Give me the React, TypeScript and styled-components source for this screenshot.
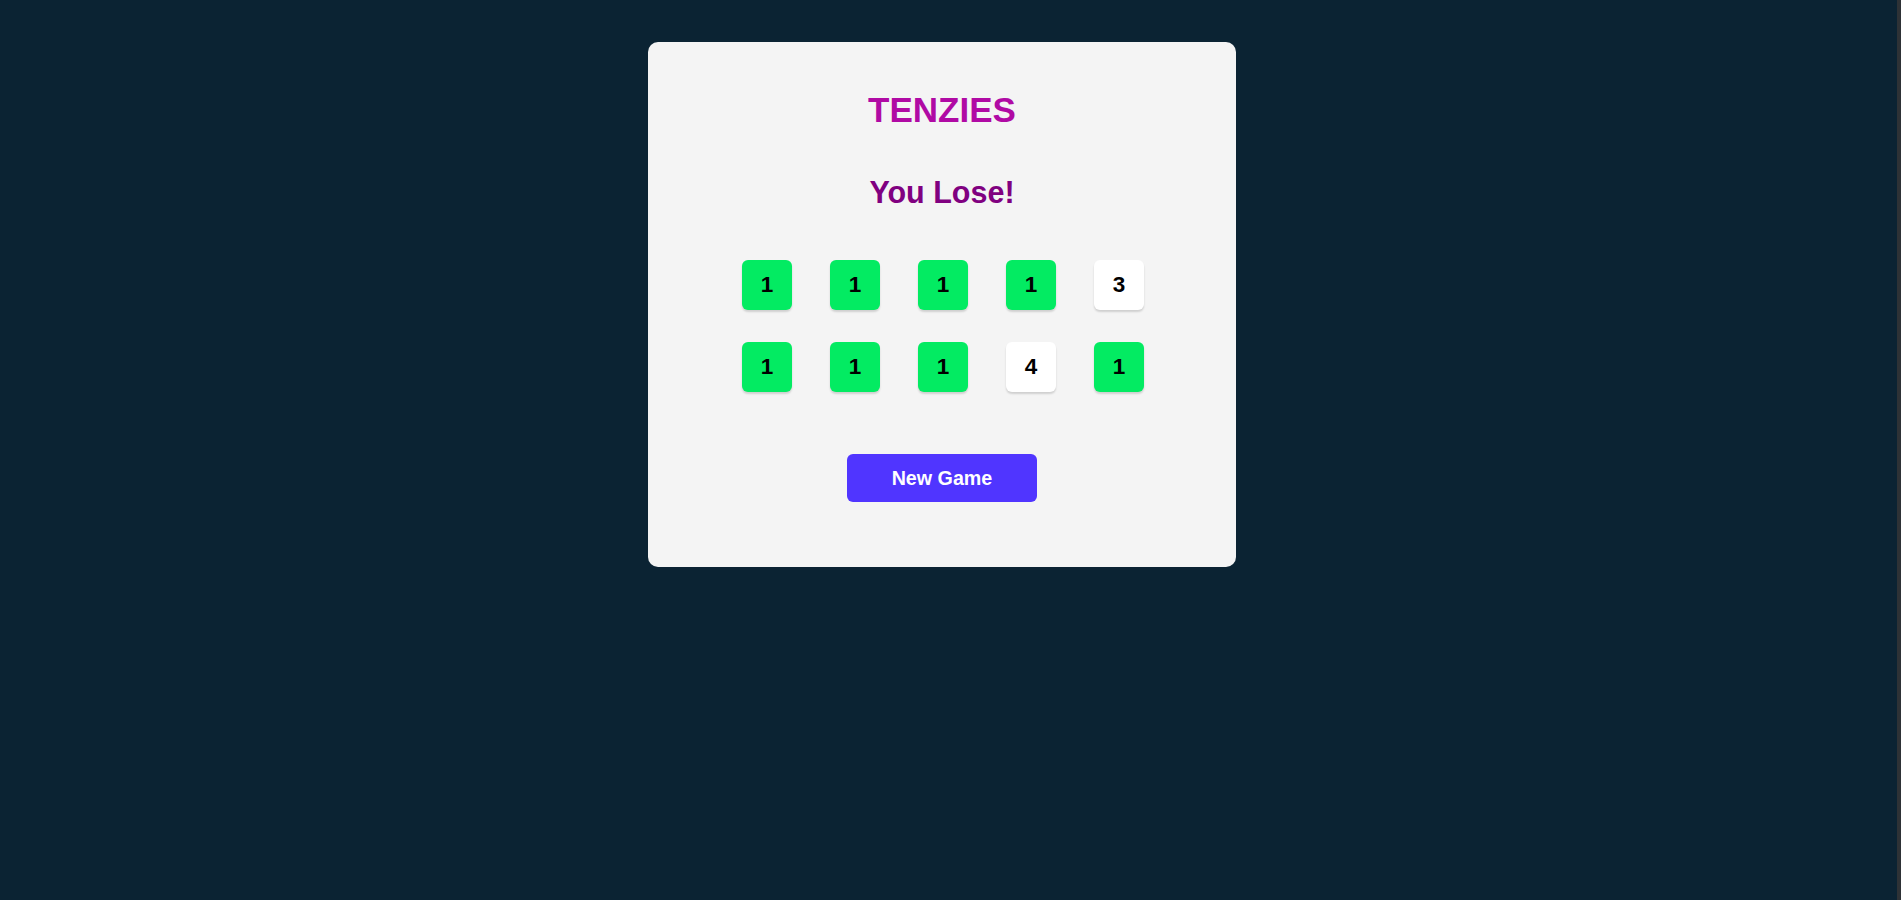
import React from "react";
import styled, { createGlobalStyle } from "styled-components";

const GlobalStyle = createGlobalStyle`
  html, body {
    margin: 0;
    padding: 0;
    background: #0b2333;
    font-family: "Liberation Sans", Arial, sans-serif;
  }
  * { box-sizing: border-box; }
`;

const Page = styled.div`
  display: flex;
  min-height: 900px;
  background: #0b2333;
`;

const Main = styled.main`
  flex: 1;
  display: flex;
  justify-content: center;
  align-items: flex-start;
  padding: 42px 13px 0 0;
`;

const Strip = styled.div`
  width: 4px;
  background: #2e3236;
`;

const Card = styled.section`
  width: 588px;
  height: 525px;
  background: #f4f4f4;
  border-radius: 10px;
  padding: 47px 0 65px;
  display: flex;
  flex-direction: column;
  align-items: center;
`;

const Title = styled.h1`
  margin: 0;
  font-size: 35px;
  line-height: 42px;
  font-weight: 700;
  color: #b00aa4;
`;

const Status = styled.h2`
  margin: 43px 0 0;
  font-size: 30.5px;
  line-height: 36px;
  font-weight: 700;
  color: #800080;
`;

const DiceGrid = styled.div`
  margin: 50px 0 0 2px;
  display: grid;
  grid-template-columns: repeat(5, 50px);
  column-gap: 38px;
  row-gap: 32px;
`;

const Die = styled.div<{ $held: boolean }>`
  width: 50px;
  height: 50px;
  border-radius: 6px;
  background: ${(p) => (p.$held ? "#03eb62" : "#ffffff")};
  box-shadow: 0 2px 2px rgba(0, 0, 0, 0.15);
  display: flex;
  align-items: center;
  justify-content: center;
  font-size: 22.5px;
  font-weight: 700;
  color: #000;
`;

const Button = styled.button`
  margin-top: 62px;
  width: 190px;
  height: 48px;
  border: none;
  border-radius: 6px;
  background: #5035ff;
  color: #fff;
  font-family: "Liberation Sans", Arial, sans-serif;
  font-size: 19.7px;
  font-weight: 700;
  cursor: pointer;
`;

const dice = [
  { value: 1, held: true },
  { value: 1, held: true },
  { value: 1, held: true },
  { value: 1, held: true },
  { value: 3, held: false },
  { value: 1, held: true },
  { value: 1, held: true },
  { value: 1, held: true },
  { value: 4, held: false },
  { value: 1, held: true },
];

export default function App() {
  return (
    <>
      <GlobalStyle />
      <Page>
        <Main>
          <Card>
            <Title>TENZIES</Title>
            <Status>You Lose!</Status>
            <DiceGrid>
              {dice.map((d, i) => (
                <Die key={i} $held={d.held}>
                  {d.value}
                </Die>
              ))}
            </DiceGrid>
            <Button>New Game</Button>
          </Card>
        </Main>
        <Strip />
      </Page>
    </>
  );
}
